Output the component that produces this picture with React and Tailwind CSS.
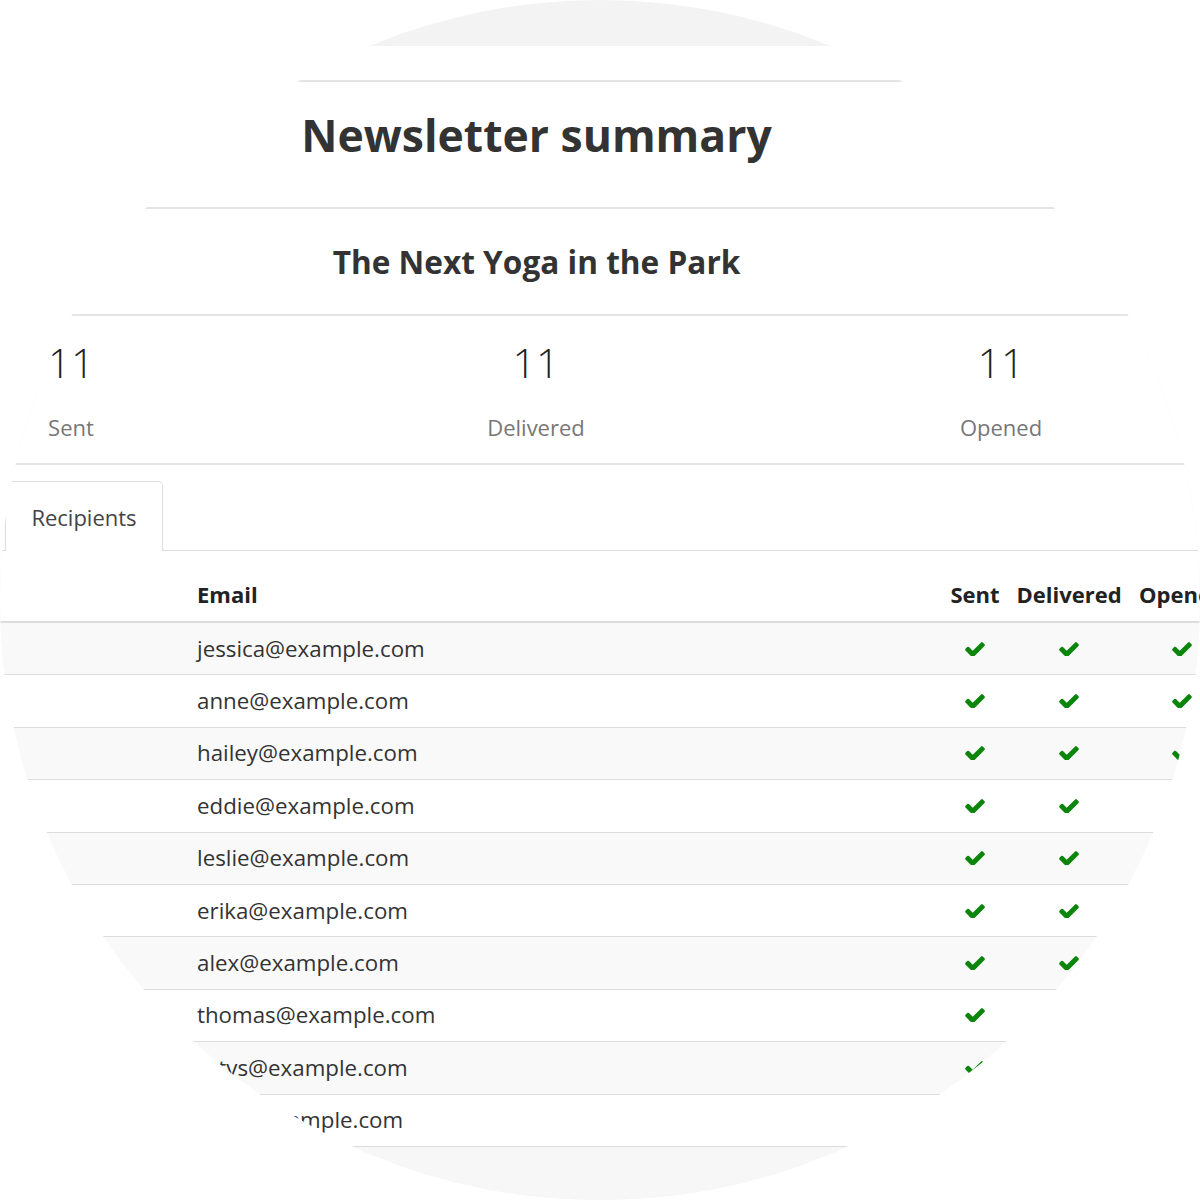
import React from "react";

const FONT = { fontFamily: '"Open Sans", "Noto Sans", sans-serif' };

function Check() {
  return (
    <svg width="20" height="14" viewBox="110 350 1570 1050" className="inline-block">
      <path
        fill="#0b850b"
        d="M1671 566q0 40-28 68l-724 724-136 136q-28 28-68 28t-68-28l-136-136-362-362q-28-28-28-68t28-68l136-136q28-28 68-28t68 28l294 295 656-657q28-28 68-28t68 28l136 136q28 28 28 68z"
      />
    </svg>
  );
}

const rows = [
  ["jessica@example.com", 1, 1, 1],
  ["anne@example.com", 1, 1, 1],
  ["hailey@example.com", 1, 1, 1],
  ["eddie@example.com", 1, 1, 1],
  ["leslie@example.com", 1, 1, 1],
  ["erika@example.com", 1, 1, 1],
  ["alex@example.com", 1, 1, 1],
  ["thomas@example.com", 1, 1, 1],
  ["ottvs@example.com", 1, 1, 1],
  ["nate@example.com", 1, 1, 1],
];

function Hr() {
  return <div className="h-[2px] w-full bg-[#e4e4e4]" />;
}

export default function App() {
  return (
    <div className="w-[1200px] h-[1200px] bg-white" style={FONT}>
      <div className="w-[1200px] h-[1200px] rounded-full overflow-hidden bg-[#f3f3f3] flex flex-col">
        <div className="h-[46px] shrink-0" />
        <div className="bg-white pt-[34px] shrink-0 w-[1200px]">
          <Hr />
          <div className="h-[125px] pt-[29px] w-[1073px] text-center">
            <h1 className="text-[44.5px] leading-[48px] font-bold text-[#333]">
              Newsletter summary
            </h1>
          </div>
          <Hr />
          <div className="h-[105px] pt-[37px] w-[1073px] text-center">
            <h2 className="text-[31.6px] leading-[32px] font-bold text-[#333]">
              The Next Yoga in the Park
            </h2>
          </div>
          <Hr />
          <div className="h-[147px] pt-[24px] flex w-[1395px] ml-[-161.5px]">
            {[
              ["11", "Sent"],
              ["11", "Delivered"],
              ["11", "Opened"],
            ].map(([n, l]) => (
              <div key={l} className="w-[465px] text-center">
                <div className="text-[41px] leading-[44px] font-light text-[#222]">{n}</div>
                <div className="mt-[32px] text-[22px] leading-[22px] text-[#777]">{l}</div>
              </div>
            ))}
          </div>
          <Hr />
          <div className="pt-[16px] border-b border-[#dddddd] flex">
            <div className="ml-[5px] w-[158px] h-[70px] -mb-px bg-white border border-b-0 border-[#dddddd] rounded-t-[5px] flex items-center justify-center text-[22px] leading-[22px] text-[#444]">
              Recipients
            </div>
          </div>
          <div className="w-[1300px]">
            <div className="h-[72px] flex items-end pb-[16px] border-b-2 border-[#dddddd] text-[22px] leading-[22px] font-bold text-[#222]">
              <div className="w-[942px] pl-[197px]">Email</div>
              <div className="w-[66px] text-center">Sent</div>
              <div className="w-[122px] text-center">Delivered</div>
              <div className="w-[104px] text-center">Opened</div>
            </div>
            {rows.map(([email, s, d, o], i) => (
              <div
                key={email}
                className={`h-[52.4px] flex items-center border-b border-[#dddddd] text-[22.3px] leading-[22px] text-[#333] ${
                  i % 2 === 0 ? "bg-[#f9f9f9]" : "bg-white"
                }`}
              >
                <div className="w-[942px] pl-[197px]">{email}</div>
                <div className="w-[66px] flex justify-center">{s ? <Check /> : null}</div>
                <div className="w-[122px] flex justify-center">{d ? <Check /> : null}</div>
                <div className="w-[104px] flex justify-center">{o ? <Check /> : null}</div>
              </div>
            ))}
          </div>
        </div>
        <div className="flex-1 bg-[#f7f7f7]" />
      </div>
    </div>
  );
}
